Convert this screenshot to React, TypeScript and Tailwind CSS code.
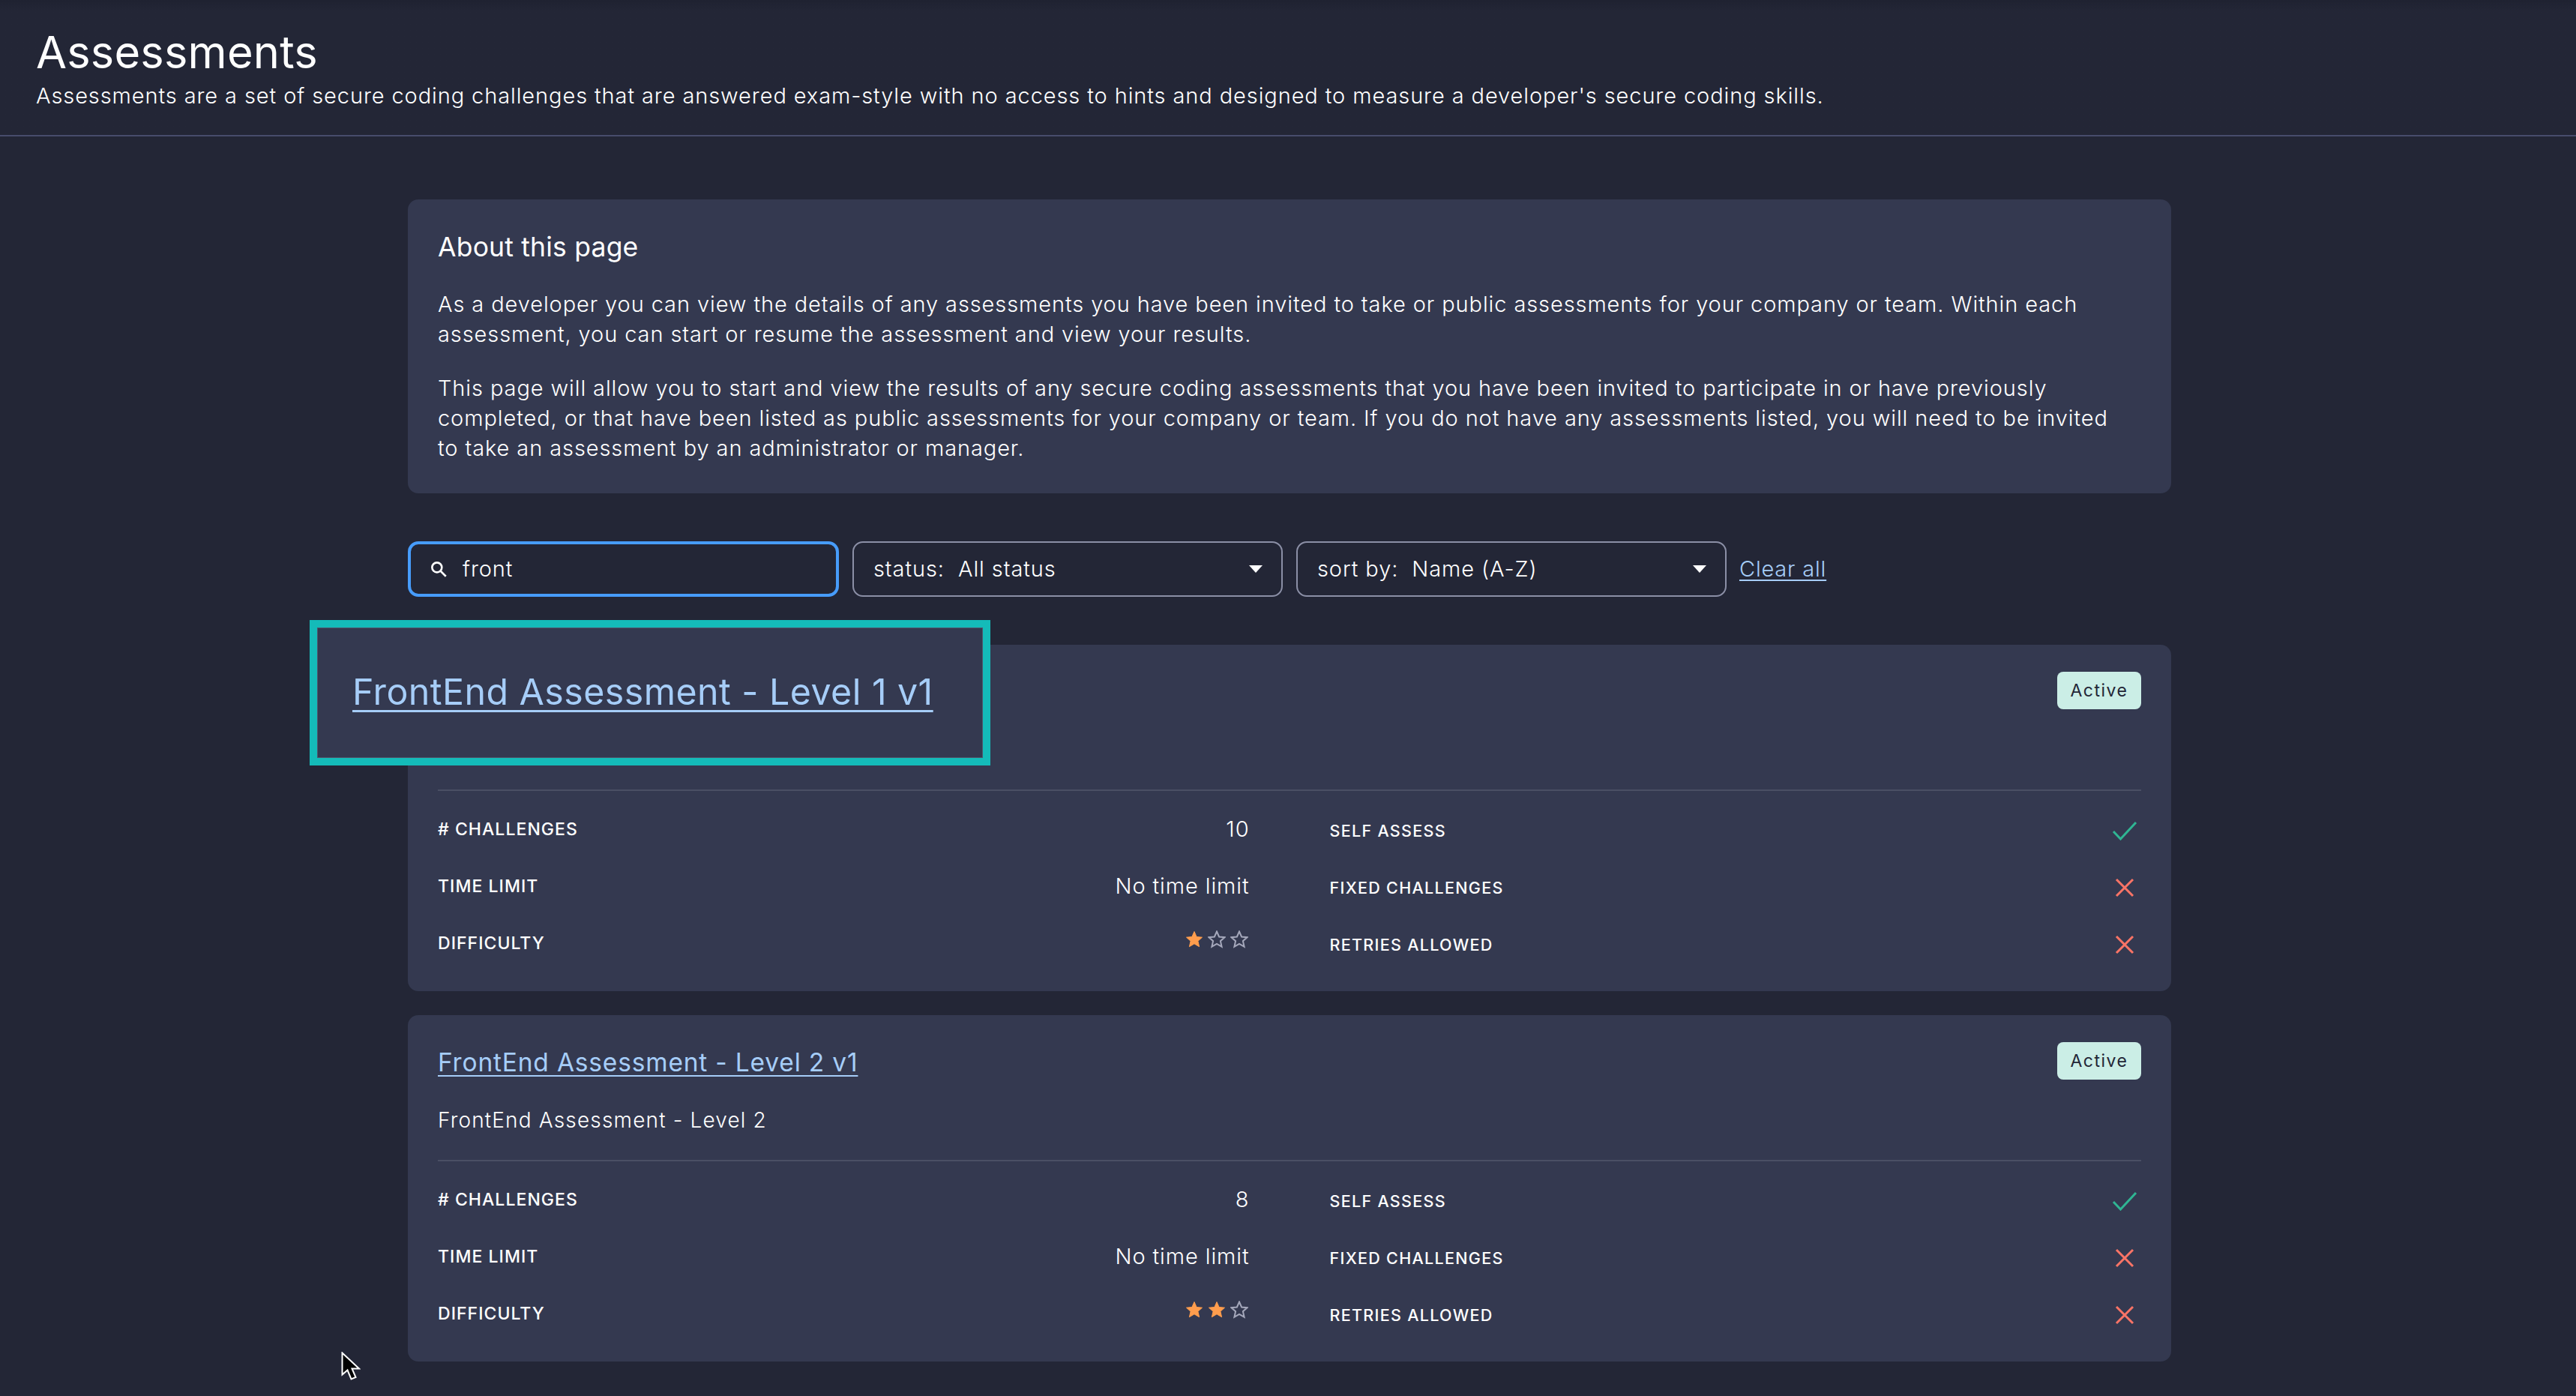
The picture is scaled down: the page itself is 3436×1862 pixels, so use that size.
import React from "react";

const sans = "font-['Inter','Noto_Sans',sans-serif]";

function Star({ filled }: { filled: boolean }) {
  return (
    <svg width="24" height="24" viewBox="0 0 24 24" className="block">
      <path
        d="M12 1.5l3.1 7 7.4.7-5.6 5 1.7 7.5L12 17.8l-6.6 3.9 1.7-7.5-5.6-5 7.4-.7z"
        fill={filled ? "#ff9d4d" : "none"}
        stroke={filled ? "#ff9d4d" : "#a5a8bb"}
        strokeWidth={filled ? 1 : 2}
        strokeLinejoin="miter"
      />
    </svg>
  );
}

function Check() {
  return (
    <svg width="34" height="26" viewBox="0 0 34 26" className="block">
      <path d="M2 14l9.5 10L32 2" fill="none" stroke="#2fb593" strokeWidth="3" />
    </svg>
  );
}

function Cross() {
  return (
    <svg width="26" height="26" viewBox="0 0 26 26" className="block">
      <path d="M2 2l22 22M24 2L2 24" fill="none" stroke="#fb7466" strokeWidth="3" />
    </svg>
  );
}

function Caret() {
  return (
    <svg width="18" height="10" viewBox="0 0 18 10" className="block">
      <path d="M0 0h18L9 10z" fill="#ffffff" />
    </svg>
  );
}

function Select({ label }: { label: string }) {
  return (
    <div className="flex h-[74px] w-[574px] items-center justify-between rounded-[14px] border-2 border-[#8b8fa6] pr-[25px] pl-[26px]">
      <span className="text-[29px] font-light tracking-[0.9px] whitespace-pre text-white">{label}</span>
      <Caret />
    </div>
  );
}

function Row({ label, value }: { label: string; value: React.ReactNode }) {
  return (
    <div className="flex h-[76px] items-center justify-between">
      <span className="text-[23px] font-medium tracking-[1.05px] text-white">{label}</span>
      {value}
    </div>
  );
}

function Row2({ label, ok }: { label: string; ok: boolean }) {
  return (
    <div className="flex h-[76px] translate-y-[2px] items-center justify-between">
      <span className="text-[21.5px] font-medium tracking-[1.3px] text-white">{label}</span>
      <span className="flex w-[44px] justify-center">{ok ? <Check /> : <Cross />}</span>
    </div>
  );
}

function Card({
  title,
  description,
  challenges,
  stars,
  highlight,
}: {
  title: string;
  description: string;
  challenges: string;
  stars: number;
  highlight?: boolean;
}) {
  return (
    <section className="relative h-[462px] rounded-[14px] bg-[#343950] px-[40px] pt-[36px]">
      <div className="flex items-start justify-between">
        {highlight ? (
          <div className="h-[124px]" />
        ) : (
          <div>
            <a className="block h-[54px] text-[33.5px] leading-[54px] tracking-[0.82px] text-[#a6cdf8] underline decoration-2 underline-offset-[5px]">
              {title}
            </a>
            <p className="mt-[30px] text-[28px] leading-[40px] font-light tracking-[1.15px] text-white">{description}</p>
          </div>
        )}
        <span className="flex h-[50px] w-[112px] items-center justify-center rounded-[8px] bg-[#cbeee6] pt-[1px] text-[23px] tracking-[1.5px] text-[#232636]">
          Active
        </span>
      </div>
      <div className="mt-[33px] h-[2px] bg-[#4a4f64]" />
      <div className="mt-[13px] grid grid-cols-2 gap-x-[107px]">
        <div>
          <Row label="# CHALLENGES" value={<span className="text-[29px] font-light tracking-[0.9px] text-white">{challenges}</span>} />
          <Row label="TIME LIMIT" value={<span className="text-[29px] font-light tracking-[0.9px] text-white">No time limit</span>} />
          <Row
            label="DIFFICULTY"
            value={
              <span className="-mt-[10px] mr-[2px] flex gap-[6px]">
                {[0, 1, 2].map((i) => (
                  <Star key={i} filled={i < stars} />
                ))}
              </span>
            }
          />
        </div>
        <div>
          <Row2 label="SELF ASSESS" ok />
          <Row2 label="FIXED CHALLENGES" ok={false} />
          <Row2 label="RETRIES ALLOWED" ok={false} />
        </div>
      </div>
      {highlight && (
        <div className="absolute -top-[33px] -left-[131px] flex h-[194px] w-[908px] items-center border-[10px] border-[#14bbb9] bg-[#343950] pl-[47px] outline outline-1 -outline-offset-[11px] outline-[#4f566d]">
          <a className="-mt-[2px] text-[48.3px] tracking-[0.45px] text-[#a6cdf8] underline decoration-[3px] underline-offset-[7px]">
            {title}
          </a>
        </div>
      )}
    </section>
  );
}

export default function App() {
  return (
    <div className={`relative h-[1862px] w-[3436px] overflow-hidden bg-[#232636] ${sans}`}>
      <header className="h-[182px] border-b-2 border-[#474c6c] bg-gradient-to-b from-[#1f2231] from-0% to-[#232636] to-[8%] pt-[34px] pl-[48px]">
        <h1 className="text-[59.5px] leading-[70px] font-normal tracking-[0.2px] text-white">Assessments</h1>
        <p className="mt-[4px] text-[29px] leading-[40px] font-light tracking-[0.9px] text-white">
          Assessments are a set of secure coding challenges that are answered exam-style with no access to hints and designed to measure a developer's secure coding skills.
        </p>
      </header>
      <main className="ml-[544px] w-[2352px] pt-[84px]">
        <section className="h-[392px] rounded-[14px] bg-[#343950] px-[40px] pt-[38px]">
          <h2 className="mt-[1px] text-[35.5px] leading-[50px] font-normal tracking-[0.2px] text-white">About this page</h2>
          <p className="mt-[31px] text-[29px] leading-[40px] font-light tracking-[0.9px] text-white">
            As a developer you can view the details of any assessments you have been invited to take or public assessments for your company or team. Within each assessment, you can start or resume the assessment and view your results.
          </p>
          <p className="mt-[32px] pr-[12px] text-[29px] leading-[40px] font-light tracking-[0.9px] text-white">
            This page will allow you to start and view the results of any secure coding assessments that you have been invited to participate in or have previously completed, or that have been listed as public assessments for your company or team. If you do not have any assessments listed, you will need to be invited to take an assessment by an administrator or manager.
          </p>
        </section>
        <div className="mt-[64px] flex h-[74px] items-center gap-[18px]">
          <div className="flex h-[74px] w-[575px] items-center rounded-[14px] border-[4px] border-[#479cfb] pl-[24px]">
            <svg width="26" height="26" viewBox="0 0 24 24" className="block" fill="none" stroke="#fff" strokeWidth="2.4">
              <circle cx="10" cy="10" r="6" />
              <path d="M14.5 14.5L21 21" />
            </svg>
            <span className="ml-[19px] text-[29px] font-light tracking-[0.9px] text-white">front</span>
          </div>
          <Select label="status:  All status" />
          <Select label="sort by:  Name (A-Z)" />
          <a className="-ml-[1px] text-[29px] font-light tracking-[0.8px] text-[#a6cdf8] underline decoration-2 underline-offset-[4px]">Clear all</a>
        </div>
        <div className="mt-[64px] flex flex-col gap-[32px]">
          <Card title="FrontEnd Assessment - Level 1 v1" description="FrontEnd Assessment - Level 1" challenges="10" stars={1} highlight />
          <Card title="FrontEnd Assessment - Level 2 v1" description="FrontEnd Assessment - Level 2" challenges="8" stars={2} />
        </div>
      </main>
      <svg width="26" height="38" viewBox="0 0 26 38" className="absolute top-[1803px] left-[455px]">
        <path d="M1.5 1.5v29l7-6 5 12 6-2.5-5-11.5h9.5z" fill="#000" stroke="#fff" strokeWidth="2" />
      </svg>
    </div>
  );
}
